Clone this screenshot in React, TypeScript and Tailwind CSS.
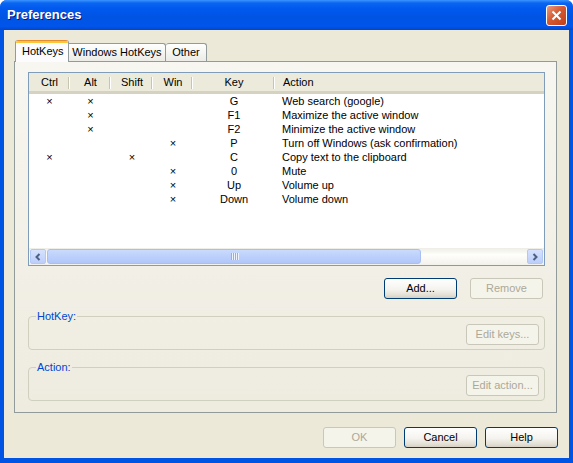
import React from 'react';
import clsx from 'clsx';

type HotKeyRow = {
  ctrl?: boolean;
  alt?: boolean;
  shift?: boolean;
  win?: boolean;
  key: string;
  action: string;
};

const rows: HotKeyRow[] = [
  { ctrl: true, alt: true, key: 'G', action: 'Web search (google)' },
  { alt: true, key: 'F1', action: 'Maximize the active window' },
  { alt: true, key: 'F2', action: 'Minimize the active window' },
  { win: true, key: 'P', action: 'Turn off Windows (ask confirmation)' },
  { ctrl: true, shift: true, key: 'C', action: 'Copy text to the clipboard' },
  { win: true, key: '0', action: 'Mute' },
  { win: true, key: 'Up', action: 'Volume up' },
  { win: true, key: 'Down', action: 'Volume down' },
];

const columns = [
  { label: 'Ctrl', width: 'w-[41px]' },
  { label: 'Alt', width: 'w-[41px]' },
  { label: 'Shift', width: 'w-[42px]' },
  { label: 'Win', width: 'w-[40px]' },
  { label: 'Key', width: 'w-[82px]' },
];

function XpButton({ label, disabled }: { label: string; disabled?: boolean }) {
  return (
    <button
      className={clsx(
        'w-[73px] h-[21px] rounded-[3px] border flex items-center justify-center leading-none',
        disabled
          ? 'border-[#C9C7BA] bg-[#F5F4EA] text-[#ACA899]'
          : 'border-[#003C74] bg-[linear-gradient(to_bottom,#FFFFFF_0%,#F4F3EE_55%,#E3DFD4_85%,#D6D0C5_100%)] text-black'
      )}
    >
      {label}
    </button>
  );
}

function Mark({ on }: { on?: boolean }) {
  return <>{on ? '×' : ''}</>;
}

function ScrollArrow({ dir }: { dir: 'left' | 'right' }) {
  return (
    <div className="w-[16px] h-[15px] my-px mx-px rounded-[2px] border border-[#B4C8F6] bg-[linear-gradient(to_bottom,#D6E2FD,#BCCEFA)] flex items-center justify-center">
      <svg width="8" height="8" viewBox="0 0 8 8">
        <path
          d={dir === 'left' ? 'M5.5 1 L2.5 4 L5.5 7' : 'M2.5 1 L5.5 4 L2.5 7'}
          fill="none"
          stroke="#4D6185"
          strokeWidth="2"
        />
      </svg>
    </div>
  );
}

function GroupBox({ title, button }: { title: string; button: string }) {
  return (
    <fieldset className="w-[517px] h-[40px] border border-[#D0D0BF] rounded-[4px] px-[5px]">
      <legend className="ml-[2px] px-px text-[#0046D5] leading-[13px]">{title}</legend>
      <div className="flex justify-end mt-px">
        <XpButton label={button} disabled />
      </div>
    </fieldset>
  );
}

export default function App() {
  return (
    <div className="w-[573px] h-[463px] flex flex-col bg-[#0054E3] rounded-t-[7px] overflow-hidden font-['Liberation_Sans',Arial,sans-serif] text-[11px] text-black">
      {/* caption */}
      <div className="h-[30px] shrink-0 flex items-center justify-between pl-[7px] pr-[6px] bg-[linear-gradient(to_bottom,#3D95FF_0%,#0A66F0_10%,#0058EE_30%,#0054E3_60%,#0055EB_88%,#0046C8_100%)]">
        <span className="text-white font-bold text-[13px] [text-shadow:1px_1px_#0A1883]">Preferences</span>
        <div className="w-[21px] h-[21px] rounded-[3px] border border-white bg-[linear-gradient(135deg,#E99C80_0%,#D65A32_45%,#C23F18_100%)] flex items-center justify-center">
          <svg width="11" height="11" viewBox="0 0 11 11">
            <path d="M1.5 1.5 L9.5 9.5 M9.5 1.5 L1.5 9.5" stroke="white" strokeWidth="2" />
          </svg>
        </div>
      </div>

      {/* client area */}
      <div className="flex-1 mx-[4px] mb-[5px] bg-[#ECE9D8] flex flex-col pl-[10px] pt-[10px]">
        {/* tabs */}
        <div className="flex items-end h-[21px] pl-px relative z-10">
          <div className="w-[54px] h-[22px] -mb-px bg-[#FCFCFE] border-x border-[#919B9C] rounded-t-[3px] overflow-hidden flex flex-col">
            <div className="h-px bg-[#E68B2C]" />
            <div className="h-[2px] bg-[#FFC73C]" />
            <div className="flex-1 flex items-center pl-[6px] pb-[2px]">HotKeys</div>
          </div>
          <div className="w-[97px] h-[18px] border-t border-r border-[#919B9C] rounded-tr-[3px] bg-[linear-gradient(to_bottom,#FFFFFF,#F3F3EF_60%,#ECEBE6)] flex items-center justify-center">
            Windows HotKeys
          </div>
          <div className="w-[41px] h-[18px] border-t border-r border-[#919B9C] rounded-t-[3px] bg-[linear-gradient(to_bottom,#FFFFFF,#F3F3EF_60%,#ECEBE6)] flex items-center justify-center">
            Other
          </div>
        </div>

        {/* tab page */}
        <div className="w-[543px] h-[352px] border border-[#919B9C] bg-[linear-gradient(to_bottom,#F7F6F0,#EEEBDF)] pl-[13px] pt-[10px] flex flex-col">
          <div className="w-[517px] h-[194px] border border-[#7F9DB9] bg-white flex flex-col">
            {/* list header */}
            <div className="h-[21px] shrink-0 flex bg-[#EBEADB] border-b-[3px] border-[#D6D2C2]">
              {columns.map((c) => (
                <div key={c.label} className={clsx(c.width, 'relative flex items-center justify-center')}>
                  {c.label}
                  <div className="absolute right-0 top-[4px] h-[12px] w-[2px] border-l border-[#C7C5B2] border-r border-r-white" />
                </div>
              ))}
              <div className="flex-1 flex items-center pl-[8px]">Action</div>
            </div>

            {/* list rows */}
            <div className="flex-1">
              {rows.map((r) => (
                <div key={r.key} className="h-[14px] flex items-center leading-[14px]">
                  <div className="w-[41px] text-center"><Mark on={r.ctrl} /></div>
                  <div className="w-[41px] text-center"><Mark on={r.alt} /></div>
                  <div className="w-[42px] text-center"><Mark on={r.shift} /></div>
                  <div className="w-[40px] text-center"><Mark on={r.win} /></div>
                  <div className="w-[82px] text-center">{r.key}</div>
                  <div className="flex-1 pl-[7px] whitespace-nowrap">{r.action}</div>
                </div>
              ))}
            </div>

            {/* horizontal scrollbar */}
            <div className="h-[17px] shrink-0 flex items-center bg-[linear-gradient(to_bottom,#EEEDE5,#FEFEFB_40%,#F3F1EC)]">
              <ScrollArrow dir="left" />
              <div className="flex-1 h-full flex items-center">
                <div className="w-[374px] h-[15px] rounded-[3px] border border-[#A8BFF4] bg-[linear-gradient(to_bottom,#CADAFD,#BCD0FB_50%,#B1C7F8)] flex items-center justify-center gap-px">
                  {[0, 1, 2, 3].map((i) => (
                    <div key={i} className="w-px h-[7px] bg-[#8CB0F8] shadow-[1px_0_0_#EEF4FE]" />
                  ))}
                </div>
              </div>
              <ScrollArrow dir="right" />
            </div>
          </div>

          <div className="w-[517px] flex justify-end gap-[13px] pr-[2px] mt-[12px]">
            <XpButton label="Add..." />
            <XpButton label="Remove" disabled />
          </div>

          <div className="mt-[11px]">
            <GroupBox title="HotKey:" button="Edit keys..." />
          </div>
          <div className="mt-[11px]">
            <GroupBox title="Action:" button="Edit action..." />
          </div>
        </div>

        {/* dialog buttons */}
        <div className="flex justify-end gap-[8px] pr-[11px] mt-[14px]">
          <XpButton label="OK" disabled />
          <XpButton label="Cancel" />
          <XpButton label="Help" />
        </div>
      </div>
    </div>
  );
}
